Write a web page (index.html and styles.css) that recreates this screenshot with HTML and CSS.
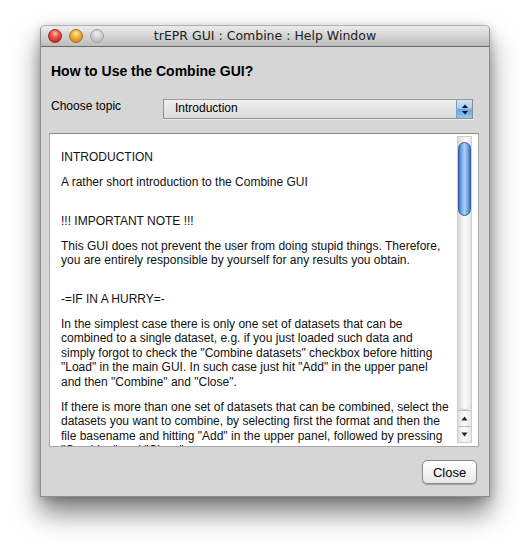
FILE: index.html
```html
<!DOCTYPE html>
<html>
<head>
<meta charset="utf-8">
<link rel="stylesheet" href="styles.css">
</head>
<body>
<div class="window">
  <div class="titlebar">
    <div class="lights">
      <span class="light red"></span>
      <span class="light orange"></span>
      <span class="light gray"></span>
    </div>
    <div class="title">trEPR GUI : Combine : Help Window</div>
    <div></div>
  </div>
  <div class="content">
    <h1 class="heading">How to Use the Combine GUI?</h1>
    <div class="topic-row">
      <span class="label">Choose topic</span>
      <div class="popup">
        <span class="popup-text">Introduction</span>
        <span class="popup-arrows">
          <svg width="8" height="12" viewBox="0 0 8 12"><path d="M4 1.5 L7 5 L1 5 Z" fill="#111"/><path d="M1 8 L7 8 L4 11.5 Z" fill="#111"/></svg>
        </span>
      </div>
    </div>
    <div class="textbox">
      <div class="text">
        <p>INTRODUCTION</p>
        <p class="gap">A rather short introduction to the Combine GUI</p>
        <p>!!! IMPORTANT NOTE !!!</p>
        <p class="gap">This GUI does not prevent the user from doing stupid things. Therefore,<br>you are entirely responsible by yourself for any results you obtain.</p>
        <p>-=IF IN A HURRY=-</p>
        <p>In the simplest case there is only one set of datasets that can be<br>combined to a single dataset, e.g. if you just loaded such data and<br>simply forgot to check the "Combine datasets" checkbox before hitting<br>"Load" in the main GUI. In such case just hit "Add" in the upper panel<br>and then "Combine" and "Close".</p>
        <p>If there is more than one set of datasets that can be combined, select the<br>datasets you want to combine, by selecting first the format and then the<br>file basename and hitting "Add" in the upper panel, followed by pressing<br>"Combine" and "Close".</p>
      </div>
      <div class="scrollbar">
        <div class="track">
          <div class="thumb"></div>
          <div class="track-end"></div>
        </div>
        <div class="arrow up">
          <svg width="7" height="5" viewBox="0 0 7 5"><path d="M3.5 0.5 L6.5 4.5 L0.5 4.5 Z" fill="#222"/></svg>
        </div>
        <div class="arrow down">
          <svg width="7" height="5" viewBox="0 0 7 5"><path d="M0.5 0.5 L6.5 0.5 L3.5 4.5 Z" fill="#222"/></svg>
        </div>
      </div>
    </div>
    <div class="buttons">
      <button class="btn">Close</button>
    </div>
  </div>
</div>
</body>
</html>
```
FILE: styles.css
```css
html {
  margin: 0;
  min-height: 100%;
  background: #ffffff;
}
body {
  margin: 0;
  min-height: 552px;
  box-sizing: border-box;
  padding: 25px 0 0 40px;
  font-family: "Liberation Sans", Arial, sans-serif;
  color: #000;
}
.window {
  box-sizing: border-box;
  width: 450px;
  height: 472px;
  background: #d6d6d6;
  border: 1px solid #8e8e8e;
  border-top-color: #b0b0b0;
  border-radius: 5px 5px 0 0;
  box-shadow: 0 16px 26px rgba(0, 0, 0, 0.5), 0 2px 10px rgba(0, 0, 0, 0.2);
  display: flex;
  flex-direction: column;
}
.titlebar {
  box-sizing: border-box;
  height: 21px;
  border-radius: 4px 4px 0 0;
  background: linear-gradient(to bottom, #ececec 0%, #d9d9d9 40%, #bcbcbc 100%);
  border-bottom: 1px solid #6a6a6a;
  display: grid;
  grid-template-columns: 1fr auto 1fr;
  align-items: center;
}
.lights {
  display: flex;
  gap: 7px;
  padding-left: 7px;
}
.light {
  width: 14px;
  height: 14px;
  border-radius: 50%;
  box-sizing: border-box;
}
.red {
  background: radial-gradient(circle at 50% 30%, #ffc0b8 0%, #f05a4e 35%, #c9261b 80%, #a4160e 100%);
  border: 1px solid #9a2a20;
}
.orange {
  background: radial-gradient(circle at 50% 30%, #ffe7b0 0%, #f7b540 35%, #d98a16 80%, #b56c0d 100%);
  border: 1px solid #a8701d;
}
.gray {
  background: radial-gradient(circle at 50% 30%, #f2f2f2 0%, #cfcfcf 45%, #b0b0b0 100%);
  border: 1px solid #a3a3a3;
}
.title {
  font-family: "DejaVu Sans", sans-serif;
  font-size: 12.5px;
  color: #222;
  line-height: 16px;
  white-space: nowrap;
}
.content {
  flex: 1;
  display: flex;
  flex-direction: column;
  padding: 16px 10px 0 8px;
}
.heading {
  margin: 0;
  padding-left: 2px;
  font-size: 14px;
  line-height: 16px;
  font-weight: bold;
}
.topic-row {
  margin-top: 20px;
  padding-left: 2px;
  display: flex;
  align-items: flex-start;
}
.label {
  width: 112px;
  font-size: 12px;
  line-height: 14px;
}
.popup {
  box-sizing: border-box;
  width: 310px;
  height: 20px;
  border: 1px solid #8f8f8f;
  border-top-color: #9a9a9a;
  background: linear-gradient(to bottom, #f0f0f0 0%, #e4e4e4 50%, #dedede 100%);
  display: flex;
  box-shadow: 0 1px 0 rgba(255,255,255,0.5);
}
.popup-text {
  flex: 1;
  padding-left: 11px;
  font-size: 12px;
  line-height: 17px;
}
.popup-arrows {
  width: 15px;
  display: flex;
  align-items: center;
  justify-content: center;
  background: linear-gradient(to bottom, #cfe4f9 0%, #a7cbf0 45%, #6aa6e4 55%, #94c6f3 100%);
  border-left: 1px solid #7a9cc4;
}
.textbox {
  box-sizing: border-box;
  margin-top: 14px;
  height: 314px;
  background: #fff;
  border: 1px solid #a8a8a8;
  border-top-color: #8a8a8a;
  display: flex;
  overflow: hidden;
}
.text {
  flex: 1;
  padding: 16px 0 0 11px;
  font-size: 12px;
  line-height: 14.5px;
  white-space: nowrap;
  overflow: hidden;
  color: #111;
}
.text p {
  margin: 0 0 10.5px;
}
.text p.gap {
  margin-bottom: 24px;
}
.scrollbar {
  width: 15px;
  margin: 2px 6px 3px 0;
  display: flex;
  flex-direction: column;
  background: linear-gradient(to right, #d8d8d8 0%, #f4f4f4 40%, #fbfbfb 60%, #e6e6e6 100%);
  border: 1px solid #cfcfcf;
  box-sizing: border-box;
}
.track {
  flex: 1;
  display: flex;
  flex-direction: column;
  padding-top: 5px;
}
.thumb {
  height: 74px;
  border-radius: 7px;
  box-sizing: border-box;
  border: 1px solid #2f5f9f;
  background: linear-gradient(to right, #3b74c4 0%, #79ace8 25%, #a9cff5 50%, #79ace8 75%, #3b74c4 100%);
}
.track-end {
  flex: 1;
  border-radius: 0 0 7px 7px;
  border-bottom: 1px solid #c8c8c8;
}
.arrow {
  height: 15px;
  display: flex;
  align-items: center;
  justify-content: center;
  border-top: 1px solid #bdbdbd;
  background: linear-gradient(to right, #e2e2e2 0%, #fafafa 50%, #e6e6e6 100%);
}
.buttons {
  margin-top: 13px;
  display: flex;
  justify-content: flex-end;
  padding-right: 2px;
}
.btn {
  box-sizing: border-box;
  width: 55px;
  height: 24px;
  margin: 0;
  padding: 0;
  border: 1px solid #8a8a8a;
  border-radius: 5px;
  background: linear-gradient(to bottom, #ffffff 0%, #f4f4f4 50%, #e8e8e8 100%);
  box-shadow: 0 1px 1px rgba(0,0,0,0.25);
  font-family: "Liberation Sans", Arial, sans-serif;
  font-size: 13px;
  color: #000;
}
```
